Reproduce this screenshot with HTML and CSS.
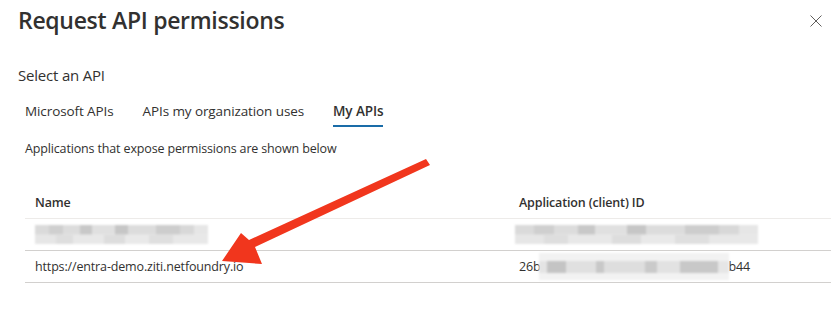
FILE: index.html
```html
<html>
  <head>
    <meta charset="utf-8">
    <link rel="stylesheet" href="styles.css">
  </head>
  <body>
    <div class="panel">
      <div class="header">
        <h1 class="title">Request API permissions</h1>
        <svg class="close" width="12" height="12" viewBox="0 0 12 12">
          <path d="M0.5 0.5 L11.5 11.5 M11.5 0.5 L0.5 11.5" stroke="#605e5c" stroke-width="1" fill="none"/>
        </svg>
      </div>

      <p class="subtitle">Select an API</p>

      <div class="tabs">
        <span class="tab">Microsoft APIs</span>
        <span class="tab">APIs my organization uses</span>
        <span class="tab active">My APIs</span>
      </div>

      <p class="info">Applications that expose permissions are shown below</p>

      <div class="table">
        <div class="row head">
          <div class="cell name">Name</div>
          <div class="cell appid">Application (client) ID</div>
        </div>
        <div class="row">
          <div class="cell name"><span class="blur blur-name"></span></div>
          <div class="cell appid"><span class="blur blur-id"></span></div>
        </div>
        <div class="row">
          <div class="cell name">https://entra-demo.ziti.netfoundry.io</div>
          <div class="cell appid">26b<span class="blur blur-mid"></span>b44</div>
        </div>
      </div>
    </div>

    <svg class="arrow" width="831" height="318" viewBox="0 0 831 318">
      <path d="M426 159 L430 165 L255 247 L262 264 L222 261 L241 233 L249 240 Z" fill="#f1361d"/>
    </svg>
  </body>
</html>
```

FILE: styles.css
```css
body {
  margin: 0;
  background: #ffffff;
  color: #323130;
  font-family: "Open Sans", "Noto Sans", sans-serif;
  position: relative;
  overflow: hidden;
}
.panel {
  padding: 0 0 0 18px;
}
.header {
  display: flex;
  justify-content: space-between;
  align-items: flex-start;
  height: 42px;
}
.title {
  margin: 4px 0 0 0;
  font-size: 23px;
  line-height: 32px;
  font-weight: 600;
  letter-spacing: -0.3px;
}
.close {
  margin: 15px 9px 0 0;
}
.subtitle {
  margin: 23px 0 0 0;
  font-size: 15px;
  line-height: 20px;
  letter-spacing: -0.2px;
}
.tabs {
  display: flex;
  gap: 29px;
  margin: 14px 0 0 7px;
  height: 28px;
}
.tab {
  font-size: 13.5px;
  line-height: 20px;
  letter-spacing: -0.1px;
  border-bottom: 2px solid transparent;
  padding-top: 2px;
}
.tab.active {
  font-weight: 600;
  border-bottom-color: #1a6ca8;
}
.info {
  margin: 13px 0 0 7px;
  font-size: 12.5px;
  line-height: 18px;
  letter-spacing: -0.15px;
}
.table {
  margin: 28px 0 0 7px;
}
.row {
  display: flex;
  height: 31px;
  border-bottom: 1px solid #d2d0ce;
  align-items: center;
}
.row.head {
  height: 32px;
  border-bottom-color: #edebe9;
  font-weight: 600;
}
.cell {
  font-size: 12.5px;
  letter-spacing: -0.15px;
  display: flex;
  align-items: center;
}
.name {
  width: 484px;
  padding-left: 10px;
}
.blur {
  display: inline-block;
  height: 19px;
  filter: blur(0.8px);
  background-color: #ececec;
  background-repeat: no-repeat;
  background-size: 100% 50%, 100% 50%;
  background-position: top, bottom;
  background-image:
    linear-gradient(90deg, #dadada 0 8%, #cfcfcf 8% 16%, #dcdcdc 16% 26%, #c8c8c8 26% 33%, #e0e0e0 33% 46%, #c6c6c6 46% 54%, #dcdcdc 54% 70%, #cdcdcd 70% 84%, #d8d8d8 84% 92%, #e6e6e6 92% 100%),
    linear-gradient(90deg, #e6e6e6 0 12%, #dedede 12% 22%, #e8e8e8 22% 40%, #dddddd 40% 52%, #e9e9e9 52% 66%, #dfdfdf 66% 80%, #e8e8e8 80% 100%);
}
.blur-name {
  width: 173px;
}
.blur-id {
  width: 243px;
  margin-left: -4px;
}
.blur-mid {
  width: 190px;
  height: 27px;
  margin-left: -2px;
  background-color: #f2f2f2;
  background-size: 100% 12px;
  background-position: center;
  background-image:
    linear-gradient(90deg, #e4e4e4 0 4%, #c4c4c4 4% 14%, #e0e0e0 14% 30%, #c8c8c8 30% 34%, #dedede 34% 56%, #cacaca 56% 62%, #e2e2e2 62% 74%, #c8c8c8 74% 94%, #e6e6e6 94% 100%);
}
.arrow {
  position: absolute;
  left: 0;
  top: 0;
  pointer-events: none;
}
```
